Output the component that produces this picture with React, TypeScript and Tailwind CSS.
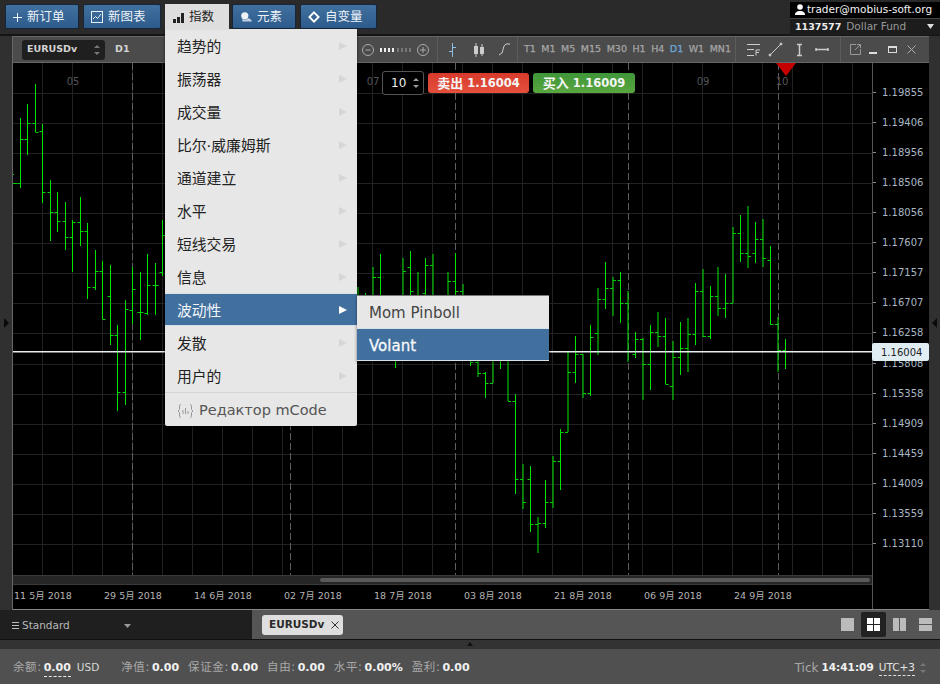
import type { ReactNode } from "react";

const font = "font-['DejaVu_Sans','Noto_Sans_CJK_SC',sans-serif]";

// [x, high, low, open, close], page coordinates; 0 means no tick
const leftBars = [
  [20.5, 118, 188, 183, 139], [27.5, 104, 155, 139, 123], [35.5, 84, 132, 123, 132], [42.5, 124, 203, 131, 192],
  [50.5, 180, 241, 192, 212], [57.5, 192, 232, 212, 221], [65.5, 202, 250, 221, 237], [72.5, 220, 272, 237, 222],
  [80.5, 197, 246, 222, 231], [87.5, 223, 299, 231, 287], [95.5, 250, 290, 287, 271], [102.5, 261, 319, 271, 319],
  [110.5, 265, 345, 296, 335], [117.5, 325, 411, 335, 392], [125.5, 300, 405, 392, 309], [132.5, 267, 324, 310, 289],
  [140.5, 272, 340, 312, 312], [147.5, 254, 315, 313, 285], [155.5, 263, 315, 285, 285], [162.5, 220, 276, 272, 235],
];

const rightBars = [
  [287, 300, 0, 0], [293, 300, 0, 0], [267, 300, 0, 277], [254, 300, 277, 0], [0, 0, 0, 0], [300, 368, 0, 0],
  [258, 305, 0, 271], [251, 300, 267, 291], [272, 299, 0, 0], [258, 295, 293, 265], [254, 300, 265, 0], [0, 0, 0, 0],
  [272, 295, 0, 281], [253, 295, 281, 291], [284, 295, 291, 0], [355, 366, 0, 362], [355, 377, 362, 373], [372, 398, 373, 383],
  [355, 383, 383, 0], [350, 369, 0, 0], [350, 401, 0, 401], [394, 494, 401, 479], [464, 509, 479, 502], [466, 532, 479, 524],
  [517, 553, 524, 523], [480, 528, 523, 502], [456, 508, 502, 461], [429, 490, 461, 432], [351, 432, 432, 372], [336, 383, 372, 354],
  [354, 398, 354, 393], [325, 396, 393, 337], [288, 355, 333, 299], [262, 309, 299, 288], [277, 316, 288, 280], [272, 323, 280, 303],
  [291, 362, 303, 0], [332, 358, 354, 339], [338, 400, 339, 364], [325, 390, 364, 332], [312, 347, 332, 336], [318, 384, 336, 384],
  [341, 400, 386, 357], [322, 375, 357, 348], [318, 372, 348, 334], [283, 345, 334, 291], [269, 337, 291, 336], [286, 339, 336, 296],
  [267, 316, 296, 308], [274, 318, 308, 303], [227, 303, 303, 233], [215, 262, 233, 253], [206, 268, 253, 256], [222, 263, 253, 239],
  [219, 267, 239, 258], [246, 325, 260, 324], [317, 372, 324, 350], [339, 369, 350, 0],
];

const prices = ["1.19855", "1.19406", "1.18956", "1.18506", "1.18056", "1.17607", "1.17157", "1.16707", "1.16258", "1.15808", "1.15358", "1.14909", "1.14459", "1.14009", "1.13559", "1.13110"];
const dates = ["11 5月 2018", "29 5月 2018", "14 6月 2018", "02 7月 2018", "18 7月 2018", "03 8月 2018", "21 8月 2018", "06 9月 2018", "24 9月 2018"];
const timeframes = ["T1", "M1", "M5", "M15", "M30", "H1", "H4", "D1", "W1", "MN1"];
const menuItems = ["趋势的", "振荡器", "成交量", "比尔·威廉姆斯", "通道建立", "水平", "短线交易", "信息", "波动性", "发散", "用户的"];
const dashed = [132.5, 290.5, 455.5, 628.5, 778.5];

function Bar({ x, hi, lo, o, c }: { x: number; hi: number; lo: number; o: number; c: number }) {
  if (!hi) return null;
  return (
    <g stroke="#00e600" strokeWidth={1}>
      <line x1={x} x2={x} y1={hi} y2={lo} />
      {o > 0 && <line x1={x - 3} x2={x} y1={o + 0.5} y2={o + 0.5} stroke="#00d000" />}
      {c > 0 && <line x1={x} x2={x + 3} y1={c + 0.5} y2={c + 0.5} stroke="#00d000" />}
    </g>
  );
}

function Chart() {
  const vertical = Array.from({ length: 28 }, (_, i) => 42.5 + i * 30);
  const horizontal = Array.from({ length: 16 }, (_, i) => 92.5 + i * 30.12);
  return (
    <svg className="block h-[512px] w-[859px]" viewBox="13 63 859 512">
      {vertical.map((x) => (
        <line key={x} x1={x} x2={x} y1={63} y2={575} stroke="#222" />
      ))}
      {horizontal.map((y) => (
        <line key={y} x1={13} x2={872} y1={Math.round(y) + 0.5} y2={Math.round(y) + 0.5} stroke="#222" />
      ))}
      {dashed.map((x) => (
        <line key={x} x1={x} x2={x} y1={63} y2={575} stroke="#5e5e5e" strokeDasharray="7 3" />
      ))}
      {leftBars.map((b) => (
        <Bar key={b[0]} x={b[0]} hi={b[1]} lo={b[2]} o={b[3]} c={b[4]} />
      ))}
      {rightBars.map((b, i) => (
        <Bar key={i} x={358 + i * 7.5} hi={b[0]} lo={b[1]} o={b[2]} c={b[3]} />
      ))}
      <line x1={13} x2={14} y1={174.5} y2={174.5} stroke="#00d000" />
      <line x1={13} x2={17} y1={183.5} y2={183.5} stroke="#00d000" />
      <rect x={13} y={351} width={859} height={1.5} fill="#e8eef0" />
      <polygon points="776,63 796,63 786,76" fill="#c40000" />
      <text x={73} y={85} fill="#555" fontSize={10} textAnchor="middle" fontFamily="DejaVu Sans">05</text>
      <text x={373} y={85} fill="#555" fontSize={10} textAnchor="middle" fontFamily="DejaVu Sans">07</text>
      <text x={703} y={85} fill="#555" fontSize={10} textAnchor="middle" fontFamily="DejaVu Sans">09</text>
      <text x={782} y={85} fill="#555" fontSize={10} textAnchor="middle" fontFamily="DejaVu Sans">10</text>
    </svg>
  );
}

function TopButton({ label, icon, width }: { label: string; icon: ReactNode; width: string }) {
  return (
    <button className={"flex h-[25px] items-center gap-[5px] rounded-[2px] border border-[#16263a] bg-linear-to-b from-[#41719f] to-[#2d5b8c] pl-[6px] pt-[1px] text-[12.5px] text-[#eef3f8] " + width}>
      {icon}
      {label}
    </button>
  );
}

function Arrow({ white }: { white?: boolean }) {
  return (
    <svg width="8" height="8" viewBox="0 0 8 8" className="ml-auto mr-[10px] -mt-[3px]">
      <polygon points="0,0 8,4 0,8" fill={white ? "#fff" : "#d6d6d6"} />
    </svg>
  );
}

function IndicatorMenu() {
  return (
    <div className="absolute left-[165px] top-[29px] z-20 w-[192px] rounded-b-[2px] bg-[#e7e7e7] shadow-[0_1px_3px_rgba(0,0,0,0.6)]">
      {menuItems.map((item) =>
        item === "波动性" ? (
          <div key={item} className="flex h-[33px] items-center border-y border-[#d8e0e8] bg-[#41709f] pl-[12px] pt-[3px] text-[14.8px] text-[#f2f5f8]">
            {item}
            <Arrow white />
          </div>
        ) : (
          <div key={item} className="flex h-[33px] items-center pl-[12px] pt-[3px] text-[14.8px] text-[#222]">
            {item}
            <Arrow />
          </div>
        ),
      )}
      <div className="flex h-[34px] items-center gap-[5px] border-t border-[#d4d4d4] pl-[12px] pt-[2px] text-[14.5px] text-[#555]">
        <svg width="17" height="16" viewBox="0 0 17 16" fill="none" stroke="#999" strokeWidth="1">
          <path d="M4 1.5C2.5 1.5 2.5 2.5 2.5 4V6.5L1 8l1.5 1.5V12c0 1.5 0 2.5 1.5 2.5M13 1.5c1.5 0 1.5 1 1.5 2.5v2.5L16 8l-1.5 1.5V12c0 1.5 0 2.5-1.5 2.5M6 7v4M8.5 5v6M11 8v3" />
        </svg>
        Редактор mCode
      </div>
      {/* submenu of the highlighted row */}
      <div className="absolute left-[192px] top-[266px] w-[192px] border-t border-[#777] bg-[#e7e7e7] shadow-[0_1px_3px_rgba(0,0,0,0.5)]">
        <div className="flex h-[32px] items-center pl-[12px] pt-[2px] text-[15px] text-[#444]">Mom Pinboll</div>
        <div className="flex h-[33px] items-center border-y border-[#d8e0e8] bg-[#41709f] pl-[12px] pt-[3px] text-[15px] text-[#f6f8fa] [-webkit-text-stroke:0.3px_#f6f8fa]">Volant</div>
      </div>
    </div>
  );
}

function Updown({ light }: { light?: boolean }) {
  const c = light ? "#999" : "#777";
  return (
    <svg width="6" height="12" viewBox="0 0 6 12">
      <polygon points="3,1 6,4 0,4" fill={c} />
      <polygon points="3,11 6,8 0,8" fill={c} />
    </svg>
  );
}

function ChartToolbar() {
  return (
    <div className="flex h-[27px] items-stretch border-y border-[#666] bg-[#4b4b4b]">
      <div className="flex w-[344px] shrink-0 items-center">
        <div className="ml-[9px] flex h-[20px] w-[83px] items-center justify-between rounded-[3px] bg-[#1f1f1f] px-[5px] text-[9.5px] font-bold text-[#d4d4d4]">
          EURUSDv
          <Updown />
        </div>
        <span className="ml-[10px] text-[9.5px] font-bold text-[#d4d4d4]">D1</span>
      </div>
      <div className="flex w-[81px] shrink-0 items-center border-r border-[#5c5c5c] pl-[4px]">
        <svg width="70" height="14" viewBox="0 0 70 14" fill="none" stroke="#aaa">
          <circle cx="7" cy="7" r="5.5" />
          <path d="M4.5 7h5M65 7h-6M62 4v6" />
          <circle cx="62" cy="7" r="5.5" />
          <path d="M20 5v4M24 5v4M28 5v4M32 5v4" stroke="#eee" strokeWidth="2" />
          <path d="M37 5v4M41 5v4M45 5v4M49 5v4" stroke="#777" strokeWidth="2" />
        </svg>
      </div>
      <div className="flex w-[80px] shrink-0 items-center border-r border-[#5c5c5c] pl-[7px]">
        <svg width="14" height="16" viewBox="0 0 14 16" fill="none" stroke="#8fc0e0">
          <path d="M7.5 1v14M4 9.5h3.5M7.5 5.5H11" />
        </svg>
        <svg width="10" height="14" viewBox="0 0 10 14" fill="none" stroke="#ccc" className="ml-[15px]">
          <path d="M2 0v14M8 1v12" />
          <rect x=".5" y="3.5" width="3" height="7" fill="#ccc" />
          <rect x="6.5" y="4.5" width="3" height="6" fill="#ccc" />
        </svg>
        <svg width="13" height="13" viewBox="0 0 13 13" fill="none" stroke="#ccc" className="ml-[14px]">
          <path d="M1 12 4 10 6 3 8 1h4" />
        </svg>
      </div>
      <div className="flex w-[218px] shrink-0 items-center gap-[5.5px] border-r border-[#5c5c5c] pl-[6px] text-[9.5px] text-[#a6a6a6] [-webkit-text-stroke:0.25px_currentColor]">
        {timeframes.map((t) => (
          <span key={t} className={t === "D1" ? "text-[#6ea8dc]" : ""}>
            {t}
          </span>
        ))}
      </div>
      <div className="flex w-[105px] shrink-0 items-center border-r border-[#5c5c5c] pl-[11px]">
        <svg width="14" height="14" viewBox="0 0 14 14" fill="none" stroke="#ccc">
          <path d="M0 1.5h13M0 6.5h7M0 12.5h7M9 12.5V7h4M9 9.5h3" />
        </svg>
        <svg width="15" height="15" viewBox="0 0 15 15" fill="none" stroke="#ccc" className="ml-[7px]">
          <path d="M2 13 13 2" />
          <circle cx="2" cy="13" r="1" fill="#ccc" />
          <circle cx="13" cy="2" r="1" fill="#ccc" />
        </svg>
        <svg width="9" height="14" viewBox="0 0 9 14" fill="none" stroke="#ccc" className="ml-[12px]">
          <path d="M2 1.5h5M2 12.5h5M4.5 1.5v11" strokeWidth="1.5" />
        </svg>
        <svg width="14" height="9" viewBox="0 0 14 9" fill="none" stroke="#ccc" className="ml-[11px]">
          <path d="M1 3v3M13 3v3M1 4.5h12" strokeWidth="1.5" />
        </svg>
      </div>
      <div className="flex flex-1 items-center pl-[9px]">
        <svg width="11" height="11" viewBox="0 0 11 11" fill="none" stroke="#999">
          <path d="M6 .5H.5v10h10V5M5 6 10.5.5M7 .5h3.5V4" />
        </svg>
        <span className="ml-[8px] mt-[6px] h-[2px] w-[8px] bg-[#ddd]" />
        <span className="ml-[11px] h-[7px] w-[9px] border border-t-2 border-[#ddd]" />
        <svg width="9" height="9" viewBox="0 0 9 9" stroke="#aaa" className="ml-[10px]">
          <path d="M.5.5l8 8M8.5.5l-8 8" />
        </svg>
      </div>
    </div>
  );
}

function Side({ dir }: { dir: "left" | "right" }) {
  return (
    <div className="flex flex-1 items-center justify-center bg-[#303030]">
      <svg width="5" height="10" viewBox="0 0 5 10">
        <polygon points={dir === "right" ? "0,0 5,5 0,10" : "5,0 0,5 5,10"} fill="#0a0a0a" />
      </svg>
    </div>
  );
}

function Stat({ label, value, underline, extra }: { label: string; value: string; underline?: boolean; extra?: string }) {
  return (
    <span className="flex items-baseline">
      <span className="tracking-[0.6px] text-[#a8a8a8]">{label}:</span>
      <span className={"ml-[2px] text-[11px] font-bold text-[#f0f0f0] " + (underline ? "border-b border-dashed border-[#eee]" : "")}>{value}</span>
      {extra && <span className="ml-[6px] text-[10.5px] text-[#d8d8d8]">{extra}</span>}
    </span>
  );
}

export default function App() {
  return (
    <div className={"relative flex h-[684px] w-[940px] flex-col overflow-hidden bg-[#2a2a2a] " + font}>
      {/* top bar */}
      <div className="flex h-[36px] items-start border-b-2 border-[#151515]">
        <div className="flex gap-[4px] pl-[5px] pt-[4px]">
          <TopButton
            label="新订单"
            width="w-[74px]"
            icon={
              <svg width="9" height="9" viewBox="0 0 9 9" stroke="#eef3f8" className="ml-[1px]">
                <path d="M4.5 0v9M0 4.5h9" />
              </svg>
            }
          />
          <TopButton
            label="新图表"
            width="w-[78px]"
            icon={
              <svg width="12" height="12" viewBox="0 0 12 12" fill="none" stroke="#e6eef6" className="ml-[1px]">
                <rect x=".5" y=".5" width="11" height="11" />
                <path d="M2 8 4.5 5.5l2 2L10 3" />
              </svg>
            }
          />
          <button className="relative z-30 -mr-[1px] flex h-[26px] w-[64px] items-center gap-[5px] bg-[#dedede] pl-[8px] pt-[1px] text-[12.5px] text-[#222]">
            <svg width="11" height="10" viewBox="0 0 11 10" fill="#222">
              <rect x="0" y="6" width="3" height="4" />
              <rect x="4" y="4" width="3" height="6" />
              <rect x="8" y="0" width="3" height="10" />
            </svg>
            指数
          </button>
          <TopButton
            label="元素"
            width="w-[64px]"
            icon={
              <svg width="12" height="12" viewBox="0 0 15 13" fill="#eef3f8" className="ml-[1px]">
                <circle cx="6" cy="5" r="4.5" />
                <path d="M3 9c2 1.5 5 1.5 7-1 2 0 4 1 5 4H3z" opacity=".75" />
              </svg>
            }
          />
          <TopButton
            label="自变量"
            width="w-[77px]"
            icon={
              <svg width="12" height="12" viewBox="0 0 13 13" fill="none" stroke="#fff" strokeWidth="2" className="ml-[1px]">
                <path d="M6.5 1.5l5 5-5 5-5-5z" />
              </svg>
            }
          />
        </div>
        <div className="ml-auto mt-[2px] flex h-[32px] w-[150px] flex-col bg-black text-[10.5px]">
          <div className="flex h-[16px] items-center gap-[2px] pl-[5px] text-[#f4f4f4]">
            <svg width="10" height="11" viewBox="0 0 10 11" fill="#fff">
              <circle cx="5" cy="3" r="2.8" />
              <path d="M0 11c0-3 2-4 5-4s5 1 5 4z" />
            </svg>
            trader@mobius-soft.org
          </div>
          <div className="flex flex-1 items-center gap-[5px] border-t border-[#444] bg-[#1c1c1c] pl-[5px]">
            <span className="text-[9.5px] font-bold text-[#ececec]">1137577</span>
            <span className="text-[#999]">Dollar Fund</span>
            <svg width="7" height="5" viewBox="0 0 7 5" className="ml-auto mr-[6px]">
              <polygon points="0,0 7,0 3.5,5" fill="#ddd" />
            </svg>
          </div>
        </div>
      </div>

      <IndicatorMenu />

      {/* chart window with side strips */}
      <div className="flex h-[574px]">
        <div className="flex w-[12px] flex-col">
          <Side dir="right" />
        </div>
        <div className="flex w-[917px] flex-col border-l border-[#666]">
          <ChartToolbar />
          <div className="relative flex flex-1 border-b border-[#888] bg-black">
            <div className="flex w-[859px] flex-col">
              <Chart />
              <div className="flex h-[10px] items-center justify-end border-y border-[#3a3a3a] bg-[#262626] pr-[2px]">
                <div className="h-[4px] w-[550px] rounded-[2px] bg-[#5a5a5a]" />
              </div>
              <div className="flex flex-1 overflow-hidden pt-[4px] text-[9.5px] text-[#b4b4b4]">
                <div className="-ml-[15px] flex">
                  {dates.map((d) => (
                    <span key={d} className="w-[90px] shrink-0 text-center">
                      {d}
                    </span>
                  ))}
                </div>
              </div>
            </div>
            <div className="flex flex-1 flex-col border-l border-[#555] pt-[14px] text-[10px] text-[#a9b7c4]">
              {prices.map((p) => (
                <div key={p} className="flex h-[30.12px] items-center">
                  <span className="h-px w-[3px] bg-[#888]" />
                  <span className="ml-[6px]">{p}</span>
                </div>
              ))}
            </div>
            {/* overlays */}
            <div className="absolute left-[859px] top-[280px] flex h-[18px] w-[57px] items-center rounded-[2px] bg-[#e0edf2] pl-[9px] text-[10px] text-[#222]">
              1.16004
            </div>
            <div className="absolute left-[369px] top-[8px] flex h-[24px] w-[42px] items-center justify-between rounded-[3px] border border-[#555] bg-black pl-[8px] pr-[4px] text-[12px] text-[#eee]">
              10
              <Updown light />
            </div>
            <div className="absolute left-[415px] top-[10px] flex items-center gap-[4px] text-[11.5px] font-bold text-[#f4f4f4]">
              <div className="flex h-[20px] w-[101px] items-center justify-center gap-[4px] rounded-[3px] bg-linear-to-b from-[#d83a2c] to-[#e4503c] pt-[1px]">
                <span className="text-[13px]">卖出</span>
                <span>1.16004</span>
              </div>
              <div className="flex h-[20px] w-[102px] items-center justify-center gap-[4px] rounded-[3px] bg-linear-to-b from-[#3f963a] to-[#58a63e] pt-[1px]">
                <span className="text-[13px]">买入</span>
                <span>1.16009</span>
              </div>
            </div>
          </div>
        </div>
        <div className="flex w-[11px] flex-col">
          <Side dir="left" />
        </div>
      </div>

      {/* workspace and tabs */}
      <div className="flex h-[30px] border-b border-[#111]">
        <div className="flex w-[252px] items-center bg-[#1f1f1f] pl-[12px] pt-[2px] text-[10.5px] text-[#b8b8b8]">
          <svg width="7" height="7" viewBox="0 0 7 7" stroke="#bbb" className="mr-[3px]">
            <path d="M0 .5h7M0 3.5h7M0 6.5h7" />
          </svg>
          Standard
          <svg width="7" height="4" viewBox="0 0 7 4" className="ml-[54px]">
            <polygon points="0,0 7,0 3.5,4" fill="#999" />
          </svg>
        </div>
        <div className="flex flex-1 items-center bg-[#555] pl-[10px]">
          <div className="flex h-[20px] w-[81px] items-center gap-[7px] rounded-[3px] bg-[#dedede] pl-[7px] text-[10.5px] font-bold text-[#2a2a2a]">
            EURUSDv
            <svg width="8" height="8" viewBox="0 0 8 8" stroke="#333">
              <path d="M.5.5l7 7M7.5.5l-7 7" />
            </svg>
          </div>
          <div className="ml-auto flex items-center gap-[7px] pr-[8px]">
            <span className="h-[13px] w-[13px] bg-[#bbb]" />
            <span className="grid h-[25px] w-[25px] grid-cols-2 gap-px rounded-[2px] bg-[#222] p-[6px]">
              <span className="bg-white" />
              <span className="bg-white" />
              <span className="bg-white" />
              <span className="bg-white" />
            </span>
            <span className="grid h-[13px] w-[13px] grid-cols-2 gap-px">
              <span className="bg-[#bbb]" />
              <span className="bg-[#bbb]" />
            </span>
            <span className="ml-[6px] grid h-[13px] w-[13px] grid-rows-2 gap-px">
              <span className="bg-[#bbb]" />
              <span className="bg-[#bbb]" />
            </span>
          </div>
        </div>
      </div>
      <div className="flex h-[9px] items-end justify-center bg-[#333]">
        <svg width="6" height="4" viewBox="0 0 6 4" className="mb-[3px]">
          <polygon points="3,0 6,4 0,4" fill="#111" />
        </svg>
      </div>

      {/* status bar */}
      <div className="flex flex-1 items-center gap-[9px] bg-[#505050] pl-[13px] pr-[14px] pt-[3px] text-[11.5px]">
        <Stat label="余额" value="0.00" underline extra="USD" />
        <span className="w-[4px]" />
        <Stat label="净值" value="0.00" />
        <Stat label="保证金" value="0.00" />
        <Stat label="自由" value="0.00" />
        <Stat label="水平" value="0.00%" />
        <Stat label="盈利" value="0.00" />
        <span className="ml-auto flex items-center text-[10.5px]">
          <span className="text-[12px] text-[#a8a8a8]">Tick</span>
          <span className="ml-[3px] font-bold text-[#f0f0f0]">14:41:09</span>
          <span className="ml-[5px] border-b border-dashed border-[#ddd] text-[#e4e4e4]">UTC+3</span>
          <span className="ml-[5px]">
            <Updown />
          </span>
        </span>
      </div>
    </div>
  );
}
